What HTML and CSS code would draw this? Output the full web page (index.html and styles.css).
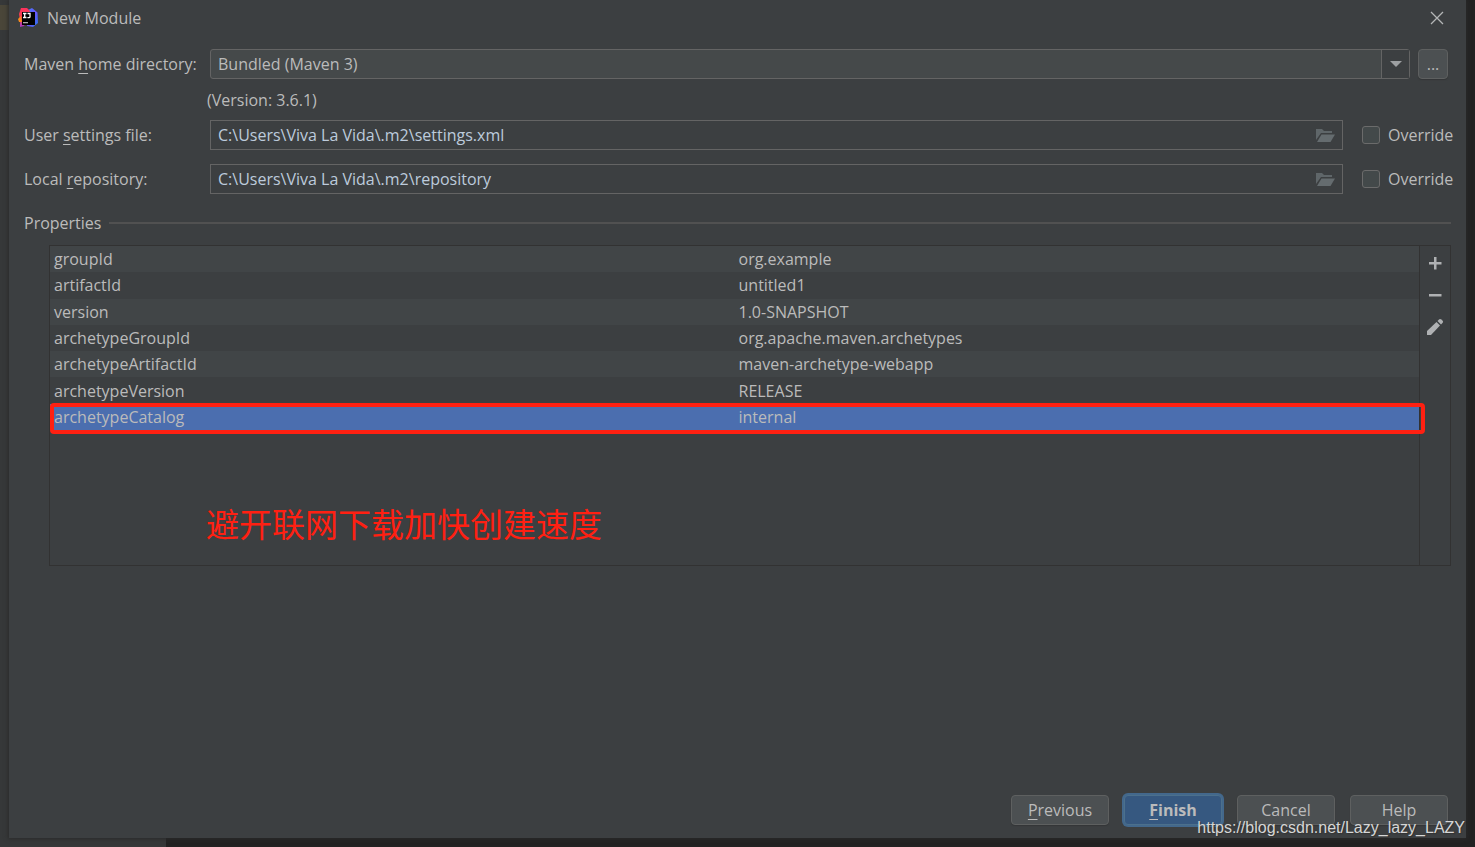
FILE: index.html
```html
<!DOCTYPE html>
<html>
	<head>
		<meta charset="UTF-8">
		<title>New Module</title>
		<link rel="stylesheet" href="styles.css">
	</head>
	<body>
		<div class="dialog">
			<div class="titlebar">
				<svg class="logo" width="20" height="20" viewBox="0 0 20 20">
					<defs>
						<linearGradient id="g1" x1="0" y1="0" x2="0" y2="1">
							<stop offset="0" stop-color="#fe315d"/>
							<stop offset="0.5" stop-color="#f5414f"/>
							<stop offset="1" stop-color="#a137c4"/>
						</linearGradient>
						<linearGradient id="g2" x1="0" y1="0" x2="1" y2="1">
							<stop offset="0" stop-color="#3f7cf5"/>
							<stop offset="0.5" stop-color="#6b57ff"/>
							<stop offset="1" stop-color="#2474e8"/>
						</linearGradient>
					</defs>
					<path fill="url(#g2)" d="M10 2L14 0L19.5 4.5L20 15L15 19L9 18Z"/>
					<path fill="url(#g1)" d="M3 0H9L12 3L10 10L6 18L2 19L2 12L1 6Z"/>
					<path fill="#f98a1c" d="M0 11L3 8L4 14L1 14Z"/>
					<path fill="#000" d="M4 4H17V17H4Z"/>
					<path fill="none" stroke="#fff" stroke-width="1.3" d="M5 5.5H8.500M6.700 5.500V9.500M5 9.500H8.500M9.500 5.500H12V8.700Q12 9.600 11 9.600H9.400"/>
					<path fill="#aaa" d="M5 14H10V15.300H5Z"/>
				</svg>
				<span class="title">New Module</span>
				<button class="close" aria-label="Close">
					<svg width="14" height="14" viewBox="0 0 14 14"><path fill="none" stroke="#b4b6b7" stroke-width="1.3" d="M1 1L13 13M13 1L1 13"/></svg>
				</button>
			</div>
			<div class="content">
				<div class="row">
					<label class="name" for="home">Maven <u>h</u>ome directory:</label>
					<div class="combo">
						<select id="home">
							<option>Bundled (Maven 3)</option>
						</select>
						<span class="arrow"></span>
					</div>
					<button class="btn more">...</button>
				</div>
				<p class="version">(Version: 3.6.1)</p>
				<div class="row">
					<label class="name" for="settings">User <u>s</u>ettings file:</label>
					<div class="field">
						<input type="text" id="settings" value="C:\Users\Viva La Vida\.m2\settings.xml">
						<svg width="19" height="15" viewBox="0 0 19 15"><path fill="#5f6669" d="M0 12V1H6L8 3H16V5H5Z"/><path fill="#656c6f" d="M5.5 6.5H19L14.5 14H1Z"/></svg>
					</div>
					<label class="override"><input type="checkbox">Override</label>
				</div>
				<div class="row">
					<label class="name" for="repo">Local <u>r</u>epository:</label>
					<div class="field">
						<input type="text" id="repo" value="C:\Users\Viva La Vida\.m2\repository">
						<svg width="19" height="15" viewBox="0 0 19 15"><path fill="#5f6669" d="M0 12V1H6L8 3H16V5H5Z"/><path fill="#656c6f" d="M5.5 6.5H19L14.5 14H1Z"/></svg>
					</div>
					<label class="override"><input type="checkbox">Override</label>
				</div>
				<div class="group">Properties</div>
				<div class="props">
					<div class="list">
						<table id="tb" cellpadding="0" cellspacing="0">
							<tr>
								<td>groupId</td>
								<td>org.example</td>
							</tr>
							<tr>
								<td>artifactId</td>
								<td>untitled1</td>
							</tr>
							<tr>
								<td>version</td>
								<td>1.0-SNAPSHOT</td>
							</tr>
							<tr>
								<td>archetypeGroupId</td>
								<td>org.apache.maven.archetypes</td>
							</tr>
							<tr>
								<td>archetypeArtifactId</td>
								<td>maven-archetype-webapp</td>
							</tr>
							<tr>
								<td>archetypeVersion</td>
								<td>RELEASE</td>
							</tr>
							<tr class="selected">
								<td>archetypeCatalog</td>
								<td>internal</td>
							</tr>
						</table>
						<p class="note">避开联网下载加快创建速度</p>
					</div>
					<div class="tools">
						<button aria-label="Add"><svg width="18" height="18" viewBox="0 0 18 18"><path fill="#afb1b3" d="M8 3H10.500V8H15.500V10.500H10.500V15.500H8V10.500H3V8H8Z"/></svg></button>
						<button aria-label="Remove"><svg width="18" height="18" viewBox="0 0 18 18"><path fill="#afb1b3" d="M3 8H15.500V10.500H3Z"/></svg></button>
						<button aria-label="Edit"><svg width="18" height="18" viewBox="0 0 18 18"><path fill="#afb1b3" d="M1 13L10.500 4L14 7.500L5 17H1Z"/><path fill="#afb1b3" d="M11.500 3L13.300 1.300Q14.300 0.500 15.300 1.400L16.700 2.800Q17.500 3.700 16.700 4.700L15 6.500Z"/></svg></button>
					</div>
				</div>
			</div>
			<div class="buttons">
				<button class="btn"><u>P</u>revious</button>
				<button class="btn finish"><u>F</u>inish</button>
				<button class="btn">Cancel</button>
				<button class="btn">Help</button>
			</div>
		</div>
		<div class="watermark">https://blog.csdn.net/Lazy_lazy_LAZY</div>
	</body>
</html>
```

FILE: styles.css
```css
*{
	margin: 0;
	padding: 0;
	box-sizing: border-box;
}
body{
	position: relative;
	display: flex;
	min-height: 100vh;
	padding: 0 9px 9px;
	background:
		linear-gradient(#4a4639, #4a4639) 0 5px / 9px 25px no-repeat,
		linear-gradient(#363839, #363839) 0 0 / 166px 100% no-repeat,
		#222;
	font-family: "Open Sans", "Noto Sans CJK SC", sans-serif;
	font-size: 16px;
	line-height: 22px;
	color: #bbb;
}
button, input, select{
	font: inherit;
	color: inherit;
}
u{
	text-underline-offset: 3px;
}
.dialog{
	flex: 1;
	display: flex;
	flex-direction: column;
	background-color: #3c3f41;
	box-shadow: 0 0 4px 1px #2b2b2b;
}
.titlebar{
	display: flex;
	align-items: center;
	height: 36px;
	padding: 0 22px 0 9px;
}
.title{
	flex: 1;
	margin-left: 9px;
}
.close{
	display: flex;
	border: 0;
	background: none;
}
.content{
	padding: 13px 15px 0;
}
.row{
	display: flex;
	align-items: center;
	height: 30px;
	margin-bottom: 14px;
}
.name{
	width: 186px;
}
.combo{
	position: relative;
	flex: 1;
	height: 30px;
}
.combo select{
	width: 100%;
	height: 30px;
	padding: 0 7px;
	border: 1px solid #646464;
	border-radius: 3px;
	background-color: #45494a;
	appearance: none;
}
.arrow{
	position: absolute;
	top: 1px;
	right: 1px;
	width: 28px;
	height: 28px;
	border-left: 1px solid #646464;
	background-color: #3c3f41;
	pointer-events: none;
}
.arrow::after{
	content: "";
	position: absolute;
	top: 11px;
	left: 8px;
	border: 6px solid transparent;
	border-top-color: #9da0a2;
	border-bottom: 0;
}
.btn{
	width: 98px;
	height: 30px;
	border: 1px solid #5e6060;
	border-radius: 4px;
	background-color: #4c5052;
	box-shadow: 0 1px 1px #343638;
}
.more{
	width: 30px;
	margin: 0 3px 0 8px;
}
.version{
	height: 31px;
	margin: -4px 0 0 183px;
}
.field{
	flex: 1;
	display: flex;
	align-items: center;
	height: 30px;
	padding: 0 7px;
	border: 1px solid #646464;
}
.field input{
	flex: 1;
	border: 0;
	outline: 0;
	background: none;
	color: #bdcbdc;
}
.override{
	display: flex;
	align-items: center;
	width: 89px;
	margin-left: 19px;
}
.override input{
	flex: none;
	width: 18px;
	height: 18px;
	margin-right: 8px;
	border: 1px solid #6b6b6b;
	border-radius: 3px;
	background-color: #43494a;
	appearance: none;
}
.group{
	display: flex;
	align-items: center;
	height: 30px;
}
.group::after{
	content: "";
	flex: 1;
	height: 2px;
	margin-left: 8px;
	background-color: #515151;
}
.props{
	display: flex;
	min-height: 321px;
	margin: 7px 0 0 25px;
	border: 1px solid #323232;
}
.list{
	flex: 1;
}
#tb{
	width: 100%;
	height: 184px;
	table-layout: fixed;
}
#tb tr{
	position: relative;
}
#tb tr:nth-child(odd){
	background-color: #414547;
}
#tb td{
	padding-left: 4px;
}
#tb tr.selected{
	background-color: #4b6eaf;
}
.selected td:last-child::after{
	content: "";
	position: absolute;
	top: -1px;
	right: -6px;
	bottom: -4px;
	left: 0;
	border: 4px solid #ff2012;
	border-radius: 4px;
}
.note{
	margin: 73px 0 0 156px;
	font-family: "Noto Sans CJK SC", sans-serif;
	font-size: 33px;
	line-height: 40px;
	color: #ff2012;
}
.tools{
	width: 31px;
	padding-top: 1px;
	border-left: 1px solid #323232;
}
.tools button{
	display: flex;
	align-items: center;
	justify-content: center;
	width: 30px;
	height: 32px;
	border: 0;
	background: none;
}
.buttons{
	display: flex;
	justify-content: flex-end;
	gap: 15px;
	margin-top: auto;
	padding: 0 18px 13px;
}
.finish{
	border-color: #4c708c;
	background-color: #365880;
	box-shadow: 0 0 0 2px #43688c;
	font-weight: bold;
}
.watermark{
	position: absolute;
	right: 10px;
	bottom: 8px;
	font-family: "Liberation Sans", sans-serif;
	font-size: 16px;
	color: #d5d6d6;
	text-shadow: 1px 1px 1px #333;
}
```
